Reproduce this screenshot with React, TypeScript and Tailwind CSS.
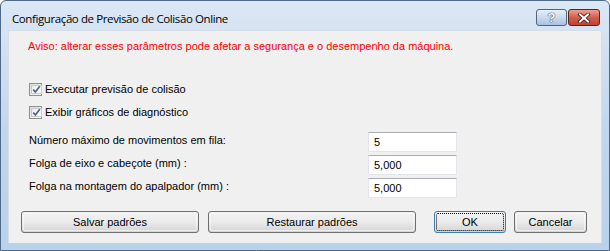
import React from "react";

const BODY_FONT = "font-['Tahoma','Liberation_Sans',Arial,sans-serif]";

function CheckBox({ label }: { label: string }) {
  return (
    <label className="flex items-center h-[13px]">
      <span className="w-[13px] h-[13px] border border-[#8f8f8f] bg-gradient-to-br from-[#dcdcdc] to-[#fbfbfb] p-[1px] flex">
        <span className="flex-1 border border-[#c9c9c9] bg-gradient-to-br from-[#e9ecf0] to-[#fdfdfd] flex items-center justify-center">
          <svg width="9" height="9" viewBox="0 0 9 9">
            <path d="M1.2 4.6 L3.4 7 L7.8 1.2" fill="none" stroke="#4d6185" strokeWidth="1.6" />
          </svg>
        </span>
      </span>
      <span className="ml-[3px] text-[11px] leading-[13px] text-black">{label}</span>
    </label>
  );
}

function Field({ label, value }: { label: string; value: string }) {
  return (
    <div className="flex items-center h-[20px]">
      <span className="w-[339px] text-[11px] leading-[13px] text-black -mt-[3px]">{label}</span>
      <div className="w-[89px] h-[20px] bg-white border border-[#e3e5ea] border-t-[#abadb3] flex items-center px-[5px] text-[11px] text-black">
        {value}
      </div>
    </div>
  );
}

function Btn({ label, w, primary }: { label: string; w: string; primary?: boolean }) {
  return (
    <button
      className={`${w} h-[22px] rounded-[3px] border ${
        primary ? "border-[#3c7fb1]" : "border-[#707070]"
      } bg-gradient-to-b from-[#f2f2f2] via-[#ebebeb] to-[#d4d4d4] p-[1px] flex`}
    >
      <span
        className={`flex-1 rounded-[2px] flex items-center justify-center text-[11px] text-black ${
          primary ? "border border-dotted border-black" : "border border-[#fbfbfb]/60"
        }`}
      >
        {label}
      </span>
    </button>
  );
}

export default function App() {
  return (
    <div className={`w-[610px] h-[251px] ${BODY_FONT}`}>
      <div className="w-full h-full rounded-t-[6px] border border-[#4f6a88] bg-gradient-to-b from-[#dbe7f4] via-[#c3d7ec] to-[#b9d1ea] flex flex-col">
        {/* Title bar */}
        <div className="h-[29px] flex items-start pl-[11px] pr-[9px]">
          <span className="mt-[10px] text-[11.5px] leading-[15px] tracking-[-0.4px] text-black font-['Open_Sans','Noto_Sans',sans-serif]">
            Configuração de Previsão de Colisão Online
          </span>
          <div className="ml-auto mt-[8px] flex gap-[1px]">
            <div className="w-[31px] h-[17px] rounded-[3px] border border-[#52657d] bg-gradient-to-b from-[#e6eef8] via-[#c9d9ee] to-[#a9c1de] flex items-center justify-center">
              <span className="text-[13px] leading-none font-bold text-white [text-shadow:0_0_1px_#1f2e44,0_0_1px_#1f2e44] font-['Liberation_Sans',sans-serif]">
                ?
              </span>
            </div>
            <div className="w-[32px] h-[17px] rounded-[3px] border border-[#5d2320] bg-gradient-to-b from-[#e8a093] via-[#d35e4d] to-[#c2402e] flex items-center justify-center">
              <svg width="14" height="10" viewBox="0 0 14 10">
                <path d="M3 1.5 L11 8.5 M11 1.5 L3 8.5" stroke="#3b1a16" strokeWidth="3.6" strokeLinecap="square" />
                <path d="M3 1.5 L11 8.5 M11 1.5 L3 8.5" stroke="#ffffff" strokeWidth="2" strokeLinecap="square" />
              </svg>
            </div>
          </div>
        </div>

        {/* Client area */}
        <div className="mx-[7px] h-[213px] bg-[#f0f0f0] border border-[#d5dfeb] border-b-0 flex flex-col pl-[19px]">
          <p className="mt-[9px] text-[11px] leading-[13px] text-[#ff0000]">
            Aviso: alterar esses parâmetros pode afetar a segurança e o desempenho da máquina.
          </p>

          <div className="mt-[30px] ml-[1px] flex flex-col gap-[10px]">
            <CheckBox label="Executar previsão de colisão" />
            <CheckBox label="Exibir gráficos de diagnóstico" />
          </div>

          <div className="mt-[13px] ml-[1px] flex flex-col gap-[3px]">
            <Field label="Número máximo de movimentos em fila:" value="5" />
            <Field label="Folga de eixo e cabeçote (mm) :" value="5,000" />
            <Field label="Folga na montagem do apalpador (mm) :" value="5,000" />
          </div>

          <div className="mt-[13px] -ml-[7px] flex">
            <Btn label="Salvar padrões" w="w-[178px]" />
            <div className="w-[9px]" />
            <Btn label="Restaurar padrões" w="w-[208px]" />
            <div className="w-[18px]" />
            <Btn label="OK" w="w-[72px]" primary />
            <div className="w-[8px]" />
            <Btn label="Cancelar" w="w-[73px]" />
          </div>
        </div>
      </div>
    </div>
  );
}
